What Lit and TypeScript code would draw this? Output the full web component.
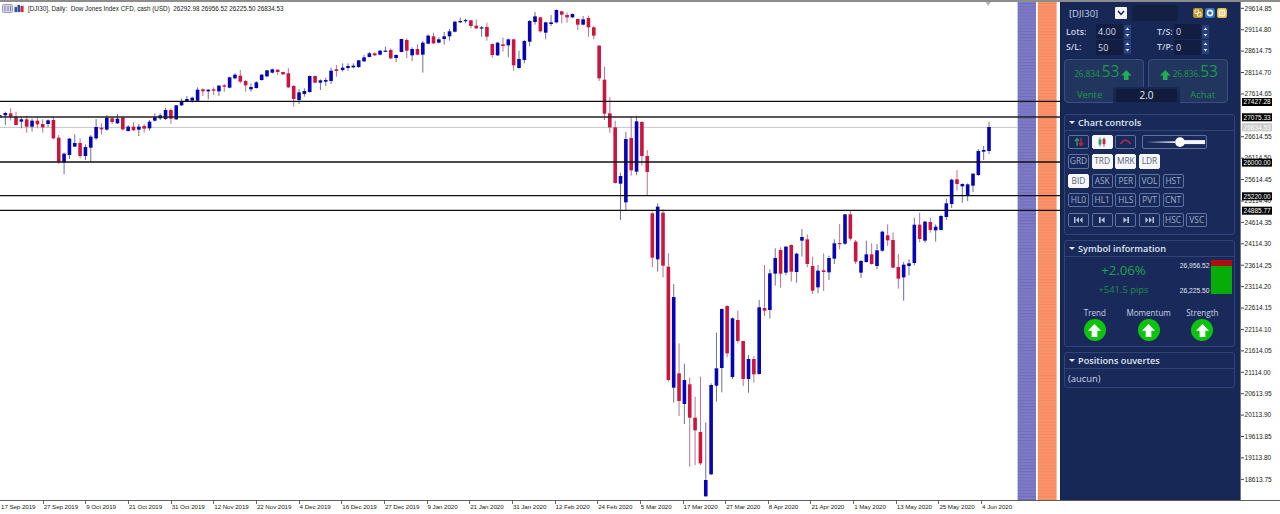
import { LitElement, html, css, svg } from "lit";
import { customElement } from "lit/decorators.js";

type Seg = { ox: number; oy: number; start: number; step: number; d: string };

const SEGS: Seg[] = [
  { ox: 0, oy: 0, start: 0, step: 16.02, d: `b 346 350 344 352,b 339 346 335 375,r 340 350 325 362,r 350 375 335 375,b 358 365 350 385,r 358 380 347 398,b 362 380 355 395,r 362 373 352 385,r 372 382 358 398,b 361 372 358 382,r 360 415 350 418,r 413 485 405 492,b 461 487 458 523,b 416 465 414 477,b 429 440 403 440,r 429 468 415 475,b 441 468 433 480,b 410 443 405 487,b 381 415 357 420,r 383 388 370 403,b 353 389 345 392,r 355 366 350 372,b 356 370 342 372,r 353 388 350 392,b 380 393 375 395,r 380 391 367 392,b 380 389 372 408,r 378 386 372 398,b 365 385 360 392,b 351 362 340 365,b 346 355 340 360,b 330 357 323 360,r 330 356 325 372,b 316 358 315 360,b 303 316 295 318,b 297 305 288 305,b 293 302 290 308,b 269 302 262 305,r 268 274 265 288,b 269 274 268 298,r 268 272 262 285,b 257 274 255 288,r 256 260 252 275,b 232 263 230 265,b 224 235 220 238,r 227 245 210 250,r 243 256 240 275,b 261 268 250 275,b 247 264 243 266,b 224 240 222 242,b 211 229 210 232,b 208 218 206 220,r 209 216 208 226,r 216 223 215 225,r 220 262 205 264,r 258 297 255 320,b 277 300 267 312,b 273 282 265 290,b 228 276 226 278,r 228 248 226 250,b 241 248 238 270,b 240 245 233 258,b 212 243 203 252,r 208 213 195 230` },
  { ox: 340, oy: 0, start: 8, step: 16.03, d: `b 203 210 190 215,b 198 204 190 212,b 197 202 190 205,b 181 201 180 204,b 172 184 165 186,b 160 171 156 172,r 160 166 157 168,b 152 164 150 166,b 152 155 140 156,r 150 175 145 178,b 165 174 163 186,b 117 156 116 157,r 120 152 115 175,b 147 166 142 183,r 147 164 133 166,b 128 164 122 218,b 107 131 103 133,r 109 130 98 132,b 118 128 112 130,b 109 117 96 134,b 94 109 87 122,b 65 95 63 97,b 63 67 53 69,b 60 63 56 70,r 61 78 60 85,r 77 85 58 87,b 82 85 78 110,r 81 110 68 122,r 132 165 130 173,b 128 166 126 168,r 133 138 113 155,b 118 136 116 172,r 118 196 116 212,b 177 204 152 206,b 123 180 120 190,b 63 125 60 138,b 49 66 36 74,r 52 94 50 98,b 67 98 65 118,b 67 72 45 78,b 30 67 28 70,r 34 44 32 70,r 45 52 38 68,b 42 52 40 54,r 57 74 55 90,b 58 74 48 76,r 54 82 47 110,r 82 107 78 118,r 137 235 135 243,r 239 341 200 360,r 340 382 292 398,r 382 549 362 551,b 528 551 518 660,b 417 607 396 632,r 414 511 350 527,b 364 515 347 525,r 366 468 363 497,r 468 516 450 585` },
  { ox: 600, oy: 200, start: 157, step: 16.03, d: `r 40 173 35 202,b 20 178 10 215,r 38 197 28 232,r 200 540 160 545,b 291 563 252 608,r 520 603 430 648,b 540 612 491 672,r 553 653 533 800,r 653 691 590 795,r 696 790 530 795,b 840 889 667 890,b 555 823 550 825,b 505 557 398 605,b 327 504 325 577,r 318 460 316 472,b 355 531 352 537,r 360 423 332 430,r 423 537 423 558,b 477 537 465 578,r 477 523 468 548,b 322 522 300 524,r 324 332 195 348,b 220 330 208 356,b 174 221 145 257,r 150 221 142 263,b 140 218 138 226,r 135 215 133 245,b 161 216 158 248,b 111 122 87 170,r 118 192 103 202,r 198 272 170 282,b 212 262 195 280` },
  { ox: 800, oy: 120, start: 71, step: 16, d: `r 451 456 400 513,b 414 457 407 480,b 370 416 358 432,r 369 372 312 388,b 283 371 282 375,r 283 356 272 362,r 365 425 360 432,b 423 458 420 474,b 403 426 362 428,r 403 432 370 434,b 391 438 372 448,b 335 392 332 395,r 346 361 313 378,r 360 443 337 445,r 441 476 402 506,b 434 472 426 542,b 430 438 418 466,b 314 429 293 436,r 314 357 278 367,b 305 362 302 368,r 306 330 293 338,b 320 331 313 365,b 288 330 285 332,b 250 291 236 300,b 179 252 176 264,r 178 192 150 212,b 192 199 190 248,b 193 227 190 243,b 161 197 160 216,b 93 165 87 168,b 90 95 78 120,b 21 93 5 102` },
];

const candles = SEGS.flatMap((s) =>
  s.d.split(",").map((row, k) => {
    const [c, a, b, w1, w2] = row.split(" ");
    const y = (v: string) => s.oy + Number(v) / 3;
    return { x: s.ox + (s.start + k * s.step) / 3, red: c === "r", top: y(a), bot: y(b), wt: y(w1), wb: y(w2) };
  })
);

const LEVELS = [
  { y: 101.4, w: 1.3, c: "#111" },
  { y: 117, w: 1.7, c: "#222" },
  { y: 162, w: 1.3, c: "#111" },
  { y: 195.6, w: 1.3, c: "#111" },
  { y: 210.4, w: 1.3, c: "#111" },
];

const PRICES = ["29614.85","29114.80","28614.75","28114.70","27614.65","","26614.55","26114.50","25614.45","25114.40","24614.35","24114.30","23614.25","23114.20","22614.15","22114.10","21614.05","21114.00","20613.95","20113.90","19613.85","19113.80","18613.75"];
const TAGS = [
  { y: 102, t: "27427.28", k: "tag" },
  { y: 117.3, t: "27075.33", k: "tag" },
  { y: 127.3, t: "26834.53", k: "tag-grey" },
  { y: 162.6, t: "26000.00", k: "tag" },
  { y: 196.3, t: "25220.00", k: "tag" },
  { y: 210.7, t: "24885.77", k: "tag" },
];
const DATES = ["17 Sep 2019","27 Sep 2019","9 Oct 2019","21 Oct 2019","31 Oct 2019","12 Nov 2019","22 Nov 2019","4 Dec 2019","16 Dec 2019","27 Dec 2019","9 Jan 2020","21 Jan 2020","31 Jan 2020","12 Feb 2020","24 Feb 2020","5 Mar 2020","17 Mar 2020","27 Mar 2020","8 Apr 2020","21 Apr 2020","1 May 2020","13 May 2020","25 May 2020","4 Jun 2020"];

const upArrow = (cls: string) => html`<svg class=${cls} viewBox="0 0 10 10"><path d="M5 0 L10 5.2 H7.2 V10 H2.8 V5.2 H0 Z" fill="currentColor"/></svg>`;

const NAV = {
  first: svg`<path d="M1 1h1.5v6H1zM6 1v6L3 4zM9.6 1v6L6.6 4z" fill="currentColor"/>`,
  prev: svg`<path d="M3 1h1.7v6H3zM8.6 1v6L5 4z" fill="currentColor"/>`,
  next: svg`<path d="M7.3 1H9v6H7.3zM3.4 1v6L7 4z" fill="currentColor"/>`,
  last: svg`<path d="M9.5 1H11v6H9.5zM2.4 1v6L5.4 4zM6 1v6l3-3z" fill="currentColor"/>`,
};

@customElement("app-root")
export class AppRoot extends LitElement {
  static styles = css`
    :host { display: block; width: 1280px; height: 514px; background: #fff; overflow: hidden; font-family: "Open Sans", "Liberation Sans", sans-serif; }
    * { box-sizing: border-box; }
    .frame { display: flex; height: 501px; border-top: 2px solid #8d8d8d; border-bottom: 1px solid #5e5e5e; }
    .plot { display: block; width: 1060px; height: 498px; flex: none; }
    .axis { display: block; width: 40px; height: 498px; flex: none; border-left: 1px solid #777; }
    .title { font: 6.3px "Liberation Sans", sans-serif; fill: #222; }
    .plabel { font: 6.5px "Liberation Sans", sans-serif; fill: #222; }
    .tag-text { font: 6.5px "Liberation Sans", sans-serif; fill: #fff; }
    .dates { display: flex; height: 13px; overflow: hidden; }
    .date { flex: none; width: 42.67px; height: 13px; padding: 2px 0 0 1px; font: 6.2px "Liberation Sans", sans-serif; letter-spacing: -0.06px; color: #222; white-space: nowrap; position: relative; }
    .date::before { content: ""; position: absolute; left: 0; top: 0; width: 1px; height: 3px; background: #666; }
    .date:first-child::before { display: none; }
    .panel { width: 180px; flex: none; height: 498px; background: #182856; color: #cfd8ea; border-left: 1px solid #121f44; }
    .toprow { display: flex; align-items: center; height: 16px; margin: 3px 0 0 4px; }
    .symbol { width: 50px; padding-left: 4px; font-size: 9.5px; color: #c8d3e6; }
    .chev { width: 12px; height: 12px; background: #f1f3f7; border-radius: 1px; display: flex; align-items: center; justify-content: center; color: #16244c; }
    .chev svg { width: 8px; height: 6px; }
    .darkbox { width: 46px; height: 16px; margin-left: 5px; background: #131f43; border-radius: 2px; }
    .tool-icons { display: flex; gap: 2.4px; margin-left: 14.5px; }
    .tool { width: 10px; height: 10px; border-radius: 2px; display: flex; }
    .tool svg { width: 100%; height: 100%; }
    .t-a { background: #b58f2d; color: #fff2c0; }
    .t-b { background: #2f70bd; color: #eaf4ff; }
    .t-c { background: #e3bd4f; color: #fff6d6; }
    .fields { margin: 3px 0 0 5px; display: grid; grid-template-columns: 30px 27px 8px 26px 17px 27px 7px; grid-auto-rows: 15px; row-gap: 0.5px; align-items: center; }
    .flabel { font-size: 8.8px; color: #c7d1e4; font-weight: 600; }
    .finput { height: 15px; background: #121e41; border-radius: 1px; font-size: 9px; line-height: 15px; padding-left: 2px; color: #d7dcea; }
    .spin { width: 7px; height: 14px; margin-left: 1px; background: #27417f; border-radius: 1px; display: flex; }
    .spin svg { width: 100%; height: 100%; }
    .prices { position: relative; display: flex; gap: 4px; height: 44px; margin: 4.5px 0 0 3px; width: 164px; }
    .pbox { flex: none; width: 80px; height: 44px; border: 1px solid #3a5183; background: #22355f; border-radius: 4px; color: #1d9a49; position: relative; }
    .quote { display: flex; align-items: center; justify-content: center; height: 27px; white-space: nowrap; font-size: 8.4px; letter-spacing: -0.1px; }
    .quote b { font-weight: 400; font-size: 15.5px; line-height: 1; margin-top: -3px; }
    .arrow { width: 10.5px; height: 10.5px; color: #1fae50; margin: 3px 2px 0; }
    .pside { position: absolute; bottom: 0; font-size: 9.4px; line-height: 15px; }
    .pside.sell { left: 12px; }
    .pside.buy { right: 12px; }
    .notch { position: absolute; left: 49px; top: 28px; width: 67px; height: 16px; background: #182856; border-radius: 3px 3px 0 0; padding: 2px 3px 0; }
    .notch div { height: 13px; background: #111c3c; border-radius: 1px; color: #e6e9f1; font-size: 10px; line-height: 13px; text-align: center; }
    .section { width: 171px; margin-left: 3px; border: 1px solid #2f4478; border-radius: 3px; background: #192a5a; }
    .controls { margin-top: 11px; height: 121px; }
    .symbolinfo { margin-top: 5px; height: 107px; }
    .positions { margin-top: 5px; height: 36px; }
    .head { height: 16px; display: flex; align-items: center; gap: 3.4px; padding-left: 3.6px; border-bottom: 1px solid #2f4478; font-size: 9.2px; font-weight: 600; color: #dfe6f2; }
    .tri { width: 0; height: 0; border-left: 3px solid transparent; border-right: 3px solid transparent; border-top: 3.4px solid #e6ebf4; }
    .ctl-body { padding: 4px 3px 0; display: flex; flex-direction: column; gap: 5.2px; }
    .btnrow { display: flex; gap: 2.67px; height: 14.2px; }
    .btn { width: 21px; height: 14.2px; border: 1px solid #5f73a3; border-radius: 2px; font-size: 8.4px; line-height: 12px; text-align: center; color: #9fadcb; display: flex; align-items: center; justify-content: center; }
    .btn.on { background: #f7f8fb; border-color: #f7f8fb; color: #5a6478; }
    .btn svg { display: block; }
    .btn.navb { color: #b4c1da; }
    .slider { width: 65px; height: 14.2px; margin-left: 2.7px; border: 1px solid #5f73a3; border-radius: 2px; }
    .slider svg { display: block; width: 100%; height: 100%; }
    .sym-top { display: flex; height: 50px; padding: 3px 2px 0 0; }
    .sym-left { flex: 1; display: flex; flex-direction: column; align-items: center; color: #1d9a49; padding-left: 2px; }
    .pct { font-size: 13.2px; line-height: 18px; margin-top: 1px; color: #21a04d; }
    .pips { font-size: 9.4px; line-height: 14px; margin-top: 3.5px; color: #1b8f46; }
    .sym-vals { width: 31px; display: flex; flex-direction: column; justify-content: space-between; align-items: flex-end; height: 34px; padding: 2px 1.5px 0 0; font: 6.7px "Liberation Sans", sans-serif; color: #e2e6ef; }
    .range { width: 21px; height: 34px; background: #08ac08; }
    .range div { height: 6px; background: #b00d12; }
    .gauges { display: grid; grid-template-columns: repeat(3, 53.75px); padding: 0 0 0 3px; }
    .gauge { display: flex; flex-direction: column; align-items: center; gap: 1px; font-size: 8.1px; color: #c7d1e4; line-height: 11px; }
    .disc { width: 22px; height: 22px; border-radius: 50%; background: #0ec30e; display: flex; align-items: center; justify-content: center; color: #fff; }
    .disc svg { width: 13px; height: 13px; }
    .none { padding: 3px 3px; font-size: 9.4px; line-height: 13px; color: #cbd4e5; }
  `;

  private plot() {
    return html`<svg class="plot" viewBox="0 2 1060 498" preserveAspectRatio="none">
      <defs>
        <pattern id="stripe-a" width="4" height="3.1" patternUnits="userSpaceOnUse"><rect width="4" height="3.1" fill="#7e7bc6"/><rect width="4" height="1" fill="#6f6cbd"/></pattern>
        <pattern id="stripe-b" width="4" height="3.1" patternUnits="userSpaceOnUse"><rect width="4" height="3.1" fill="#fb9269"/><rect width="4" height="1" fill="#f38b62"/></pattern>
      </defs>
      <rect x="1017.6" y="2" width="18.4" height="498" fill="url(#stripe-a)"/>
      <rect x="1037.8" y="2" width="18.8" height="498" fill="url(#stripe-b)"/>
      <line x1="0" x2="1017" y1="127.4" y2="127.4" stroke="#c6c6c6" stroke-width="1"/>
      ${candles.map((c) => svg`<line x1=${c.x} x2=${c.x} y1=${c.wt} y2=${c.wb} stroke=${c.red ? "#b9748a" : "#6f7294"} stroke-width="1"/><rect x=${c.x - 1.8} y=${c.top} width="3.6" height=${Math.max(c.bot - c.top, 1.2)} fill=${c.red ? "#c9163f" : "#0505b4"}/>`)}
      ${LEVELS.map((l) => svg`<line x1="0" x2="1060" y1=${l.y} y2=${l.y} stroke=${l.c} stroke-width=${l.w}/>`)}
      <path d="M985.5 2 L991 2 L988.2 6 Z" fill="#b5b5b5"/>
      <g>
        <rect x="2.5" y="4.5" width="10" height="8" rx="1" fill="#d9d5e4" stroke="#9c9cb8"/>
        <path d="M5 6v5M8 6v5M10.5 6v5" stroke="#7a7fb0"/>
        <rect x="14" y="4.5" width="10" height="8" fill="#e7e7ef"/>
        <path d="M14.5 12V7h2.5v5zM17.5 12V5h2.5v7z" fill="#2c50b0"/>
        <path d="M20.5 12V6h3v6z" fill="#cc2a33"/>
      </g>
      <text class="title" x="28" y="10.6" xml:space="preserve">[DJI30], Daily:  Dow Jones Index CFD, cash (USD)  26292.98 26956.52 26225.50 26834.53</text>
    </svg>`;
  }

  private axis() {
    return html`<svg class="axis" viewBox="1241 2 39 498" preserveAspectRatio="none">
      ${PRICES.map((p, i) => {
        const y = 8.3 + i * 21.41;
        return p ? svg`<line x1="1241" x2="1244" y1=${y} y2=${y} stroke="#444"/><text class="plabel" x="1244.6" y=${y + 2.3}>${p}</text>` : "";
      })}
      ${TAGS.map((t) => svg`<rect x="1242" y=${t.y - 4} width="30" height="8" fill=${t.k === "tag" ? "#000" : "#c8c8c8"}/><text class="tag-text" x="1243.6" y=${t.y + 2.3}>${t.t}</text>`)}
    </svg>`;
  }

  private spin() {
    return html`<div class="spin"><svg viewBox="0 0 7 14"><path d="M3.5 2.6 L5.4 5 H1.6 Z M3.5 11.4 L5.4 9 H1.6 Z" fill="#e4e9f3"/></svg></div>`;
  }

  private btn(label: string, on = false) {
    return html`<div class="btn ${on ? "on" : ""}">${label}</div>`;
  }

  private nav(p: unknown) {
    return html`<div class="btn navb"><svg width="12" height="8" viewBox="0 0 12 8">${p}</svg></div>`;
  }

  private panel() {
    return html`<div class="panel">
      <div class="toprow">
        <div class="symbol">[DJI30]</div>
        <div class="chev"><svg viewBox="0 0 8 6"><path d="M1 1 L4 4.4 L7 1" fill="none" stroke="currentColor" stroke-width="1.5"/></svg></div>
        <div class="darkbox"></div>
        <div class="tool-icons">
          <div class="tool t-a"><svg viewBox="0 0 10 10"><path d="M2 2h3.6v3.6H2zM4.4 4.4H8V8H4.4z" fill="none" stroke="currentColor"/></svg></div>
          <div class="tool t-b"><svg viewBox="0 0 10 10"><circle cx="5" cy="5" r="2.6" fill="none" stroke="currentColor" stroke-width="1.6"/></svg></div>
          <div class="tool t-c"><svg viewBox="0 0 10 10"><path d="M2.5 2.5h5v5h-5z" fill="none" stroke="currentColor" stroke-width="1.3"/><path d="M5 1v8M1 5h8" stroke="currentColor" stroke-width=".7"/></svg></div>
        </div>
      </div>
      <div class="fields">
        <div class="flabel">Lots:</div><div class="finput">4.00</div>${this.spin()}<div></div><div class="flabel">T/S:</div><div class="finput">0</div>${this.spin()}
        <div class="flabel">S/L:</div><div class="finput">50</div>${this.spin()}<div></div><div class="flabel">T/P:</div><div class="finput">0</div>${this.spin()}
      </div>
      <div class="prices">
        <div class="pbox">
          <div class="quote"><span>26,834.</span><b>53</b>${upArrow("arrow")}</div>
          <div class="pside sell">Vente</div>
        </div>
        <div class="pbox">
          <div class="quote">${upArrow("arrow")}<span>26,836.</span><b>53</b></div>
          <div class="pside buy">Achat</div>
        </div>
        <div class="notch"><div>2.0</div></div>
      </div>
      <div class="section controls">
        <div class="head"><span class="tri"></span>Chart controls</div>
        <div class="ctl-body">
          <div class="btnrow">
            <div class="btn"><svg width="12" height="10" viewBox="0 0 12 10"><path d="M4 9V2M2 4l2-2.4L6 4" stroke="#2f9a62" stroke-width="1.4" fill="none"/><path d="M8 1v7M6 6l2 2.4L10 6" stroke="#c0283f" stroke-width="1.4" fill="none"/></svg></div>
            <div class="btn on"><svg width="12" height="10" viewBox="0 0 12 10"><path d="M4 0.5v9" stroke="#2f9a62"/><rect x="2.6" y="2.5" width="2.8" height="5" fill="#2f9a62"/><path d="M8 0.5v9" stroke="#c0283f"/><rect x="6.6" y="2" width="2.8" height="5" fill="#c0283f"/></svg></div>
            <div class="btn"><svg width="13" height="8" viewBox="0 0 13 8"><path d="M1.5 6 Q6.5 -1.5 11.5 6" fill="none" stroke="#b52a4a" stroke-width="1.4"/></svg></div>
            <div class="slider"><svg viewBox="0 0 63 12"><path d="M3 6 L32 5.2 V6.8 Z" fill="#e7ebf3"/><rect x="37" y="4" width="25" height="4" fill="#f4f6fa"/><circle cx="37" cy="6" r="4.9" fill="#fff"/></svg></div>
          </div>
          <div class="btnrow">${this.btn("GRD")}${this.btn("TRD", true)}${this.btn("MRK", true)}${this.btn("LDR", true)}</div>
          <div class="btnrow">${this.btn("BID", true)}${this.btn("ASK")}${this.btn("PER")}${this.btn("VOL")}${this.btn("HST")}</div>
          <div class="btnrow">${this.btn("HL0")}${this.btn("HL1")}${this.btn("HLS")}${this.btn("PVT")}${this.btn("CNT")}</div>
          <div class="btnrow">${this.nav(NAV.first)}${this.nav(NAV.prev)}${this.nav(NAV.next)}${this.nav(NAV.last)}${this.btn("HSC")}${this.btn("VSC")}</div>
        </div>
      </div>
      <div class="section symbolinfo">
        <div class="head"><span class="tri"></span>Symbol information</div>
        <div class="sym-top">
          <div class="sym-left"><div class="pct">+2.06%</div><div class="pips">+541.5 pips</div></div>
          <div class="sym-vals"><span>26,956.52</span><span>26,225.50</span></div>
          <div class="range"><div></div></div>
        </div>
        <div class="gauges">
          ${["Trend", "Momentum", "Strength"].map((g) => html`<div class="gauge">${g}<div class="disc">${upArrow("")}</div></div>`)}
        </div>
      </div>
      <div class="section positions">
        <div class="head"><span class="tri"></span>Positions ouvertes</div>
        <div class="none">(aucun)</div>
      </div>
    </div>`;
  }

  render() {
    return html`
      <div class="frame">${this.plot()}${this.panel()}${this.axis()}</div>
      <div class="dates">${DATES.map((d) => html`<div class="date">${d}</div>`)}</div>
    `;
  }
}
